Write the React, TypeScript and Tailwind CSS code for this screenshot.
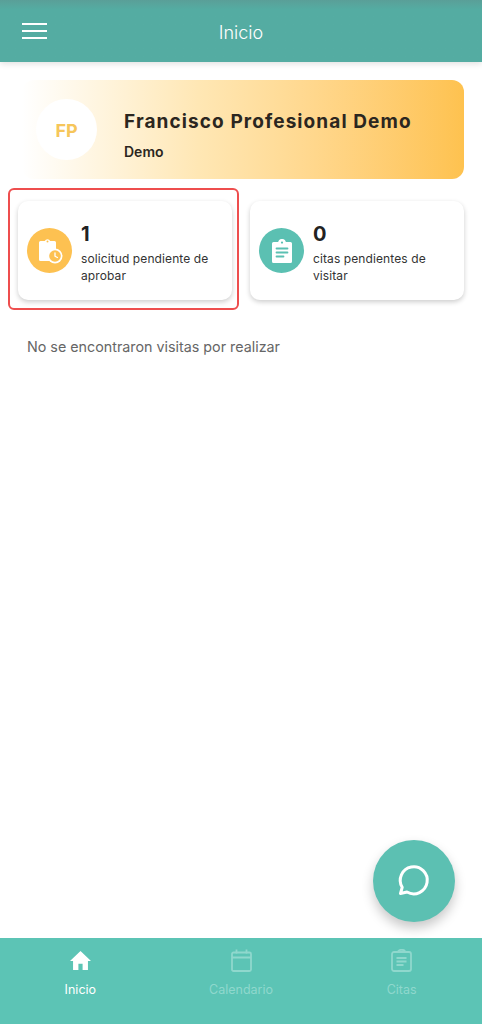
import React from "react";

function PendingIcon() {
  return (
    <svg width="28" height="28" viewBox="0 0 28 28" fill="none">
      <path d="M3 5.500A1.500 1.500 0 0 1 4.500 4h4.300a3 3 0 0 1 5.400 0h4.300A1.500 1.500 0 0 1 20 5.500V24H4.500A1.500 1.500 0 0 1 3 22.500z" fill="#fff" />
      <circle cx="11.500" cy="4.600" r="1" fill="#fdc151" />
      <circle cx="19" cy="19" r="7.500" fill="#fff" />
      <circle cx="19" cy="19" r="5.800" fill="#fdc151" />
      <path d="M19 15.800v3.400l2.400 1.300" stroke="#fff" strokeWidth="1.300" strokeLinecap="round" strokeLinejoin="round" />
    </svg>
  );
}

function ClipboardSolid() {
  return (
    <svg width="22" height="24" viewBox="0 0 22 24" fill="none">
      <path d="M2.500 3h4.600a4 4 0 0 1 7.800 0h4.600A1.500 1.500 0 0 1 21 4.500v18a1.500 1.500 0 0 1-1.500 1.500h-17A1.500 1.500 0 0 1 1 22.500v-18A1.500 1.500 0 0 1 2.500 3z" fill="#fff" />
      <circle cx="11" cy="3.600" r="1.100" fill="#5bc0b2" />
      <path d="M5.500 9.500h11M5.500 13.500h11M5.500 17.500h7" stroke="#5bc0b2" strokeWidth="1.800" strokeLinecap="round" />
    </svg>
  );
}

function StatCard({ icon, count, lines, tone }: { icon: React.ReactNode; count: string; lines: string[]; tone: string }) {
  return (
    <div className="flex h-[99px] w-[214px] items-center rounded-[10px] bg-white pl-[9px] shadow-[0_2px_5px_rgba(0,0,0,0.2)]">
      <div className={`flex h-[45px] w-[45px] shrink-0 items-center justify-center rounded-full ${tone}`}>{icon}</div>
      <div className="ml-[9px] flex flex-col pt-[5px]">
        <span className="text-[20px] leading-[22px] font-bold text-[#222222]">{count}</span>
        <span className="mt-[5px] text-[12px] leading-[17px] tracking-[0.1px] text-[#333333]">
          {lines[0]}
          <br />
          {lines[1]}
        </span>
      </div>
    </div>
  );
}

function NavItem({ icon, label, active }: { icon: React.ReactNode; label: string; active?: boolean }) {
  return (
    <div className="flex w-[161px] flex-col items-center pt-[6px]">
      <div className="flex h-[32px] items-center justify-center">{icon}</div>
      <span className={`mt-[5px] text-[12.5px] leading-[18px] ${active ? "text-white" : "text-[#8fd8cd]"}`}>{label}</span>
    </div>
  );
}

export default function App() {
  return (
    <div className="flex h-[1024px] w-[482px] flex-col overflow-hidden bg-white font-['Inter',sans-serif]">
      <header className="relative flex h-[62px] shrink-0 items-center justify-center bg-gradient-to-b from-[#5a9f98] from-0% to-[#54aca2] to-15% pt-[4px] shadow-[0_2px_6px_rgba(0,0,0,0.12)]">
        <div className="absolute top-[23px] left-[22px] flex w-[25px] flex-col gap-[5px]">
          <span className="h-[2px] bg-white" />
          <span className="h-[2px] bg-white" />
          <span className="h-[2px] bg-white" />
        </div>
        <span className="text-[18px] leading-[24px] font-light text-white">Inicio</span>
      </header>

      <main className="relative flex-1">
        <section className="mt-[18px] ml-[22px] flex h-[99px] w-[442px] items-center rounded-[12px] bg-gradient-to-r from-white via-[#ffe7b4] via-40% to-[#fec24f] pl-[14px]">
          <div className="flex h-[61px] w-[61px] items-center justify-center rounded-full bg-white pt-[2px] text-[18px] font-bold text-[#f6c65b]">FP</div>
          <div className="ml-[27px] flex flex-col pt-[12px]">
            <span className="text-[19px] leading-[24px] font-bold tracking-[1.1px] text-[#2b2620]">Francisco Profesional Demo</span>
            <span className="mt-[9px] text-[14px] leading-[18px] font-semibold text-[#2b2620]">Demo</span>
          </div>
        </section>

        <section className="mt-[9px] ml-[8px] flex items-start">
          <div className="rounded-[6px] border-2 border-[#ee4e4e] pt-[11px] pr-[5px] pb-[8px] pl-[8px]">
            <StatCard
              tone="bg-[#fdc151]"
              icon={<PendingIcon />}
              count="1"
              lines={["solicitud pendiente de", "aprobar"]}
            />
          </div>
          <div className="mt-[13px] ml-[11px]">
            <StatCard
              tone="bg-[#5bc0b2]"
              icon={<ClipboardSolid />}
              count="0"
              lines={["citas pendientes de", "visitar"]}
            />
          </div>
        </section>

        <p className="mt-[26px] ml-[27px] text-[14.3px] leading-[22px] text-[#666666]">No se encontraron visitas por realizar</p>

        <button className="absolute top-[778px] left-[373px] flex h-[82px] w-[82px] items-center justify-center rounded-full bg-[#5cc0b2] shadow-[0_6px_12px_rgba(0,0,0,0.22)]">
          <svg width="36" height="36" viewBox="0 0 36 36" fill="none">
            <path d="M4.500 30.500l1.700-6.200A13.500 13.500 0 1 1 11 29z" stroke="#fff" strokeWidth="3" strokeLinejoin="round" />
          </svg>
        </button>
      </main>

      <nav className="flex h-[86px] shrink-0 bg-[#5cc4b5]">
        <NavItem
          active
          label="Inicio"
          icon={
            <svg width="23" height="21" viewBox="0 0 24 22" fill="#fff">
              <path d="M12 1L1 11.500h3.200V21h5.600v-6.500h4.400V21h5.600v-9.500H23z" />
            </svg>
          }
        />
        <NavItem
          label="Calendario"
          icon={
            <svg width="21" height="23" viewBox="0 0 21 23" fill="none" stroke="#8fd8cd" strokeWidth="1.800">
              <rect x="1" y="3.500" width="19" height="18.500" rx="1.500" />
              <path d="M1 8.500h19M5.500 0.500v4M15.500 0.500v4" />
            </svg>
          }
        />
        <NavItem
          label="Citas"
          icon={
            <svg width="21" height="23" viewBox="0 0 21 23" fill="none" stroke="#8fd8cd" strokeWidth="1.800">
              <rect x="1" y="3" width="19" height="19" rx="2" />
              <path d="M7 3a3.500 2.200 0 0 1 7 0M5.500 9h10M5.500 12.500h10M5.500 16h7" />
            </svg>
          }
        />
      </nav>
    </div>
  );
}
